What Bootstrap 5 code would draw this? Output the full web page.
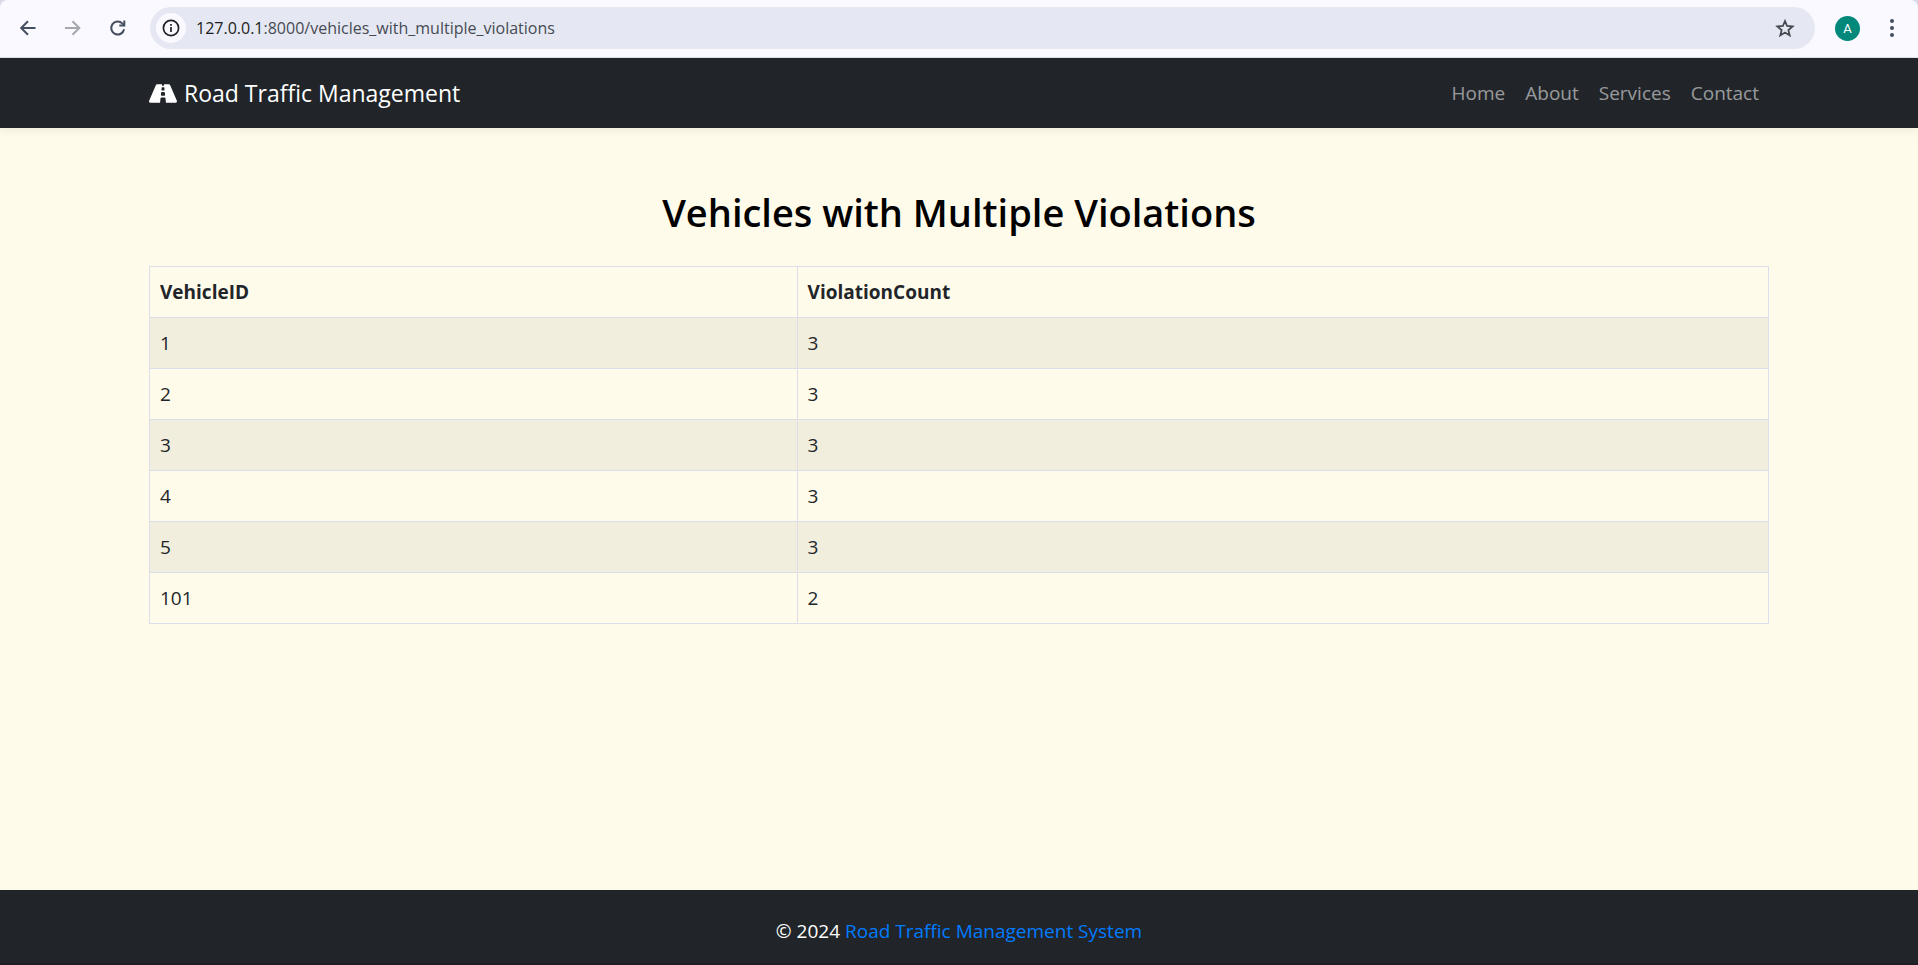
<!DOCTYPE html>
<html lang="en" data-bs-theme="light">
<head>
<meta charset="utf-8">
<meta name="viewport" content="width=device-width, initial-scale=1">
<title>Vehicles with Multiple Violations</title>
<link href="https://cdn.jsdelivr.net/npm/bootstrap@5.3.0/dist/css/bootstrap.min.css" rel="stylesheet">
<style>
  html { font-size: 20px; }
  body {
    --bs-body-font-family: "Segoe UI", "Open Sans", "Noto Sans", sans-serif;
    background: #fffbea;
    font-size: 19px;
    line-height: 30px;
  }
  .bar-frame { background: #d9dce8; }
  .browser-bar { background: #faf9ff; height: 58px; border-bottom: 1px solid #dfe1e8; padding: 7px 10px 8px 12px; border-radius: 8px 8px 0 0; }
  .history-tools { gap: 13px; }
  .tool-btn { width: 32px; height: 32px; padding: 0; border: 0; background: none; color: #454f5f; display: flex; align-items: center; justify-content: center; }
  .tool-btn:disabled { color: #a6a8b0; }
  .address { background: #e5e8f3; height: 42px; border-radius: 21px; padding: 0 14px 0 6px; margin: 0 20px 0 16px; }
  .site-info { width: 30px; height: 30px; border-radius: 50%; background: #faf9ff; color: #202124; }
  .star-btn { color: #46484d; }
  .url-text { font-size: 16px; color: #474a52; line-height: 24px; padding-left: 10px; }
  .url-text .host { color: #1c1d21; }
  .avatar-btn { width: 25px; height: 25px; border: 0; padding: 0; border-radius: 50%; background: #00897b; color: #fff; font: 13px/25px Roboto, sans-serif; margin-right: 16px; }
  .site-nav { min-height: 70px; box-shadow: 0 4px 8px rgba(0,0,0,.05); }
  .site-nav .navbar-brand { font-size: 23px; line-height: 36px; gap: 7px; }
  .page-title { font-size: 38px; font-weight: 600; line-height: 48px; color: #000; }
  .violations { --bs-table-bg: transparent; --bs-table-border-color: #dcdfe8; border-color: #dcdfe8; }
  .id-col { width: 40%; }
  .site-footer { padding: 26px 0 17px; border-bottom: 2px solid #201c24; }
  .site-footer a { color: #007bff; text-decoration: none; }
  @media (min-width: 1400px) { .container { max-width: 1650px; } }
</style>
</head>
<body class="d-flex flex-column min-vh-100">
<div class="bar-frame">
  <div class="browser-bar d-flex align-items-center" role="toolbar" aria-label="Browser">
    <div class="history-tools d-flex">
      <button class="tool-btn" type="button" aria-label="Back"><svg width="20" height="20" viewBox="0 0 20 20" fill="none" stroke="currentColor" stroke-width="2"><path d="M17.500 10H3.500M10 3.200L3.200 10l6.800 6.800"/></svg></button>
      <button class="tool-btn" type="button" aria-label="Forward" disabled><svg width="20" height="20" viewBox="0 0 20 20" fill="none" stroke="currentColor" stroke-width="2"><path d="M2 10h14M9.500 3.200l6.800 6.800L9.500 16.800"/></svg></button>
      <button class="tool-btn" type="button" aria-label="Reload"><svg width="20" height="20" viewBox="0 0 20 20" fill="none" stroke="currentColor" stroke-width="2"><path d="M16.100 11.300A6.500 6.500 0 1 1 14.300 5.400L16 7"/><path d="M16.300 2.500V7.500H11.300"/></svg></button>
    </div>
    <div class="address d-flex align-items-center flex-grow-1">
      <button class="tool-btn site-info" type="button" aria-label="Site information"><svg width="18" height="18" viewBox="0 0 18 18" fill="none" stroke="currentColor" stroke-width="1.700"><circle cx="9" cy="9" r="7.600"/><path d="M9 8v5M9 5v1.700"/></svg></button>
      <div class="url-text flex-grow-1"><span class="host">127.0.0.1</span>:8000/vehicles_with_multiple_violations</div>
      <button class="tool-btn star-btn" type="button" aria-label="Bookmark"><svg width="20" height="20" viewBox="0 0 20 20" fill="none" stroke="currentColor" stroke-width="1.800"><path d="M10 3l2.100 5 5.500.5-4.200 3.600 1.300 5.300L10 14.600l-4.700 2.800 1.300-5.300L2.400 8.500 7.900 8z"/></svg></button>
    </div>
    <button class="avatar-btn" type="button" aria-label="Profile">A</button>
    <button class="tool-btn" type="button" aria-label="Menu"><svg width="4" height="20" viewBox="0 0 4 20" fill="currentColor"><circle cx="2" cy="3" r="2"/><circle cx="2" cy="10" r="2"/><circle cx="2" cy="17" r="2"/></svg></button>
  </div>
</div>
<nav class="navbar navbar-expand-lg navbar-dark bg-dark site-nav">
  <div class="container">
    <a class="navbar-brand d-flex align-items-center" href="#"><svg width="28" height="25" viewBox="0 0 576 512" fill="#fff" aria-hidden="true"><path d="M573.190 402.670l-139.790-320C428.430 71.290 417.600 64 405.680 64h-97.590l2.450 23.160c.5 4.720-3.210 8.840-7.960 8.840h-29.160c-4.750 0-8.460-4.120-7.960-8.840L267.910 64h-97.590c-11.930 0-22.760 7.290-27.730 18.670L2.800 402.670C-6.450 423.860 8.310 448 30.540 448h196.840l10.310-97.680c.86-8.140 7.720-14.320 15.910-14.320h68.800c8.190 0 15.050 6.180 15.910 14.320L348.620 448h196.840c22.230 0 36.990-24.140 27.730-45.330zM260.400 135.160a8 8 0 0 1 7.960-7.160h39.290c4.090 0 7.530 3.090 7.960 7.160l4.600 43.580c.75 7.090-4.810 13.260-11.930 13.260h-40.540c-7.130 0-12.680-6.170-11.930-13.260l4.590-43.580zM315.640 304h-55.290c-9.500 0-16.910-8.230-15.910-17.680l5.070-48c.86-8.140 7.720-14.320 15.910-14.320h45.150c8.190 0 15.050 6.180 15.910 14.320l5.070 48c1 9.450-6.410 17.680-15.910 17.680z"/></svg>Road Traffic Management</a>
    <div class="navbar-nav flex-row ms-auto">
      <a class="nav-link" href="#">Home</a>
      <a class="nav-link" href="#">About</a>
      <a class="nav-link" href="#">Services</a>
      <a class="nav-link" href="#">Contact</a>
    </div>
  </div>
</nav>
<main class="container mt-5 flex-grow-1">
  <h1 class="page-title text-center mb-4">Vehicles with Multiple Violations</h1>
  <table class="table table-bordered table-striped violations">
    <thead><tr><th class="id-col" scope="col">VehicleID</th><th scope="col">ViolationCount</th></tr></thead>
    <tbody>
      <tr><td>1</td><td>3</td></tr>
      <tr><td>2</td><td>3</td></tr>
      <tr><td>3</td><td>3</td></tr>
      <tr><td>4</td><td>3</td></tr>
      <tr><td>5</td><td>3</td></tr>
      <tr><td>101</td><td>2</td></tr>
    </tbody>
  </table>
</main>
<footer class="site-footer bg-dark text-white text-center">
  <p class="mb-0">© 2024 <a href="#">Road Traffic Management System</a></p>
</footer>
<script src="https://cdn.jsdelivr.net/npm/bootstrap@5.3.0/dist/js/bootstrap.bundle.min.js"></script>
</body>
</html>
